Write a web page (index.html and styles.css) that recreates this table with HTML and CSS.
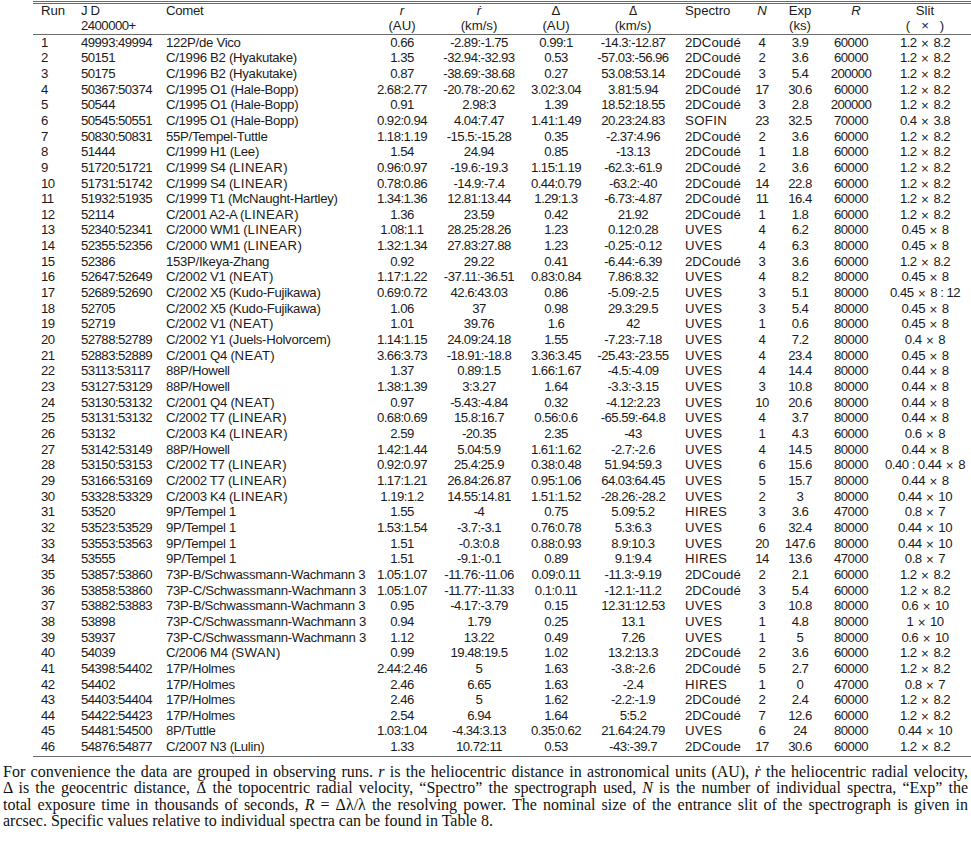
FILE: index.html
```html
<!DOCTYPE html>
<html lang="en">
<head>
<meta charset="utf-8">
<title>Observing runs</title>
<link rel="stylesheet" href="styles.css">
</head>
<body>
<div class="tbl">
  <div class="row head">
    <span class="c l run">Run</span><span class="c l jd"><span class="jdh">JD</span></span><span class="c l comet">Comet</span><span class="c m"><i>r</i></span><span class="c m"><i>ṙ</i></span><span class="c m">Δ</span><span class="c m"><span class="dd">Δ̇</span></span><span class="c l sp">Spectro</span><span class="c m"><i>N</i></span><span class="c m">Exp</span><span class="c m rh"><i>R</i></span><span class="c m">Slit</span>
  </div>
  <div class="row head head2">
    <span class="c l run"></span><span class="c l jd num">2400000+</span><span class="c l comet"></span><span class="c m">(AU)</span><span class="c m">(km/s)</span><span class="c m">(AU)</span><span class="c m">(km/s)</span><span class="c l sp"></span><span class="c m"></span><span class="c m">(ks)</span><span class="c m"></span><span class="c m">(&nbsp;&nbsp;&nbsp;×&nbsp;&nbsp;&nbsp;)</span>
  </div>
  <div class="body" id="rows"></div>
</div>
<p class="note"><span class="ln">For convenience the data are grouped in observing runs. <i>r</i> is the heliocentric distance in astronomical units (AU), <i>ṙ</i> the heliocentric radial velocity,</span> <span class="ln">Δ is the geocentric distance, <span class="ddp">Δ̇</span> the topocentric radial velocity, “Spectro” the spectrograph used, <i>N</i> is the number of individual spectra, “Exp” the</span> <span class="ln">total exposure time in thousands of seconds, <i>R</i> = Δλ/λ the resolving power. The nominal size of the entrance slit of the spectrograph is given in</span> arcsec. Specific values relative to individual spectra can be found in Table 8.</p>
<script src="app.js"></script>
</body>
</html>
```
FILE: app.js
```js
const data = `1|49993:49994|122P/de Vico|0.66|-2.89:-1.75|0.99:1|-14.3:-12.87|2DCoudé|4|3.9|60000|1.2 × 8.2
2|50151|C/1996 B2 (Hyakutake)|1.35|-32.94:-32.93|0.53|-57.03:-56.96|2DCoudé|2|3.6|60000|1.2 × 8.2
3|50175|C/1996 B2 (Hyakutake)|0.87|-38.69:-38.68|0.27|53.08:53.14|2DCoudé|3|5.4|200000|1.2 × 8.2
4|50367:50374|C/1995 O1 (Hale-Bopp)|2.68:2.77|-20.78:-20.62|3.02:3.04|3.81:5.94|2DCoudé|17|30.6|60000|1.2 × 8.2
5|50544|C/1995 O1 (Hale-Bopp)|0.91|2.98:3|1.39|18.52:18.55|2DCoudé|3|2.8|200000|1.2 × 8.2
6|50545:50551|C/1995 O1 (Hale-Bopp)|0.92:0.94|4.04:7.47|1.41:1.49|20.23:24.83|SOFIN|23|32.5|70000|0.4 × 3.8
7|50830:50831|55P/Tempel-Tuttle|1.18:1.19|-15.5:-15.28|0.35|-2.37:4.96|2DCoudé|2|3.6|60000|1.2 × 8.2
8|51444|C/1999 H1 (Lee)|1.54|24.94|0.85|-13.13|2DCoudé|1|1.8|60000|1.2 × 8.2
9|51720:51721|C/1999 S4 (LINEAR)|0.96:0.97|-19.6:-19.3|1.15:1.19|-62.3:-61.9|2DCoudé|2|3.6|60000|1.2 × 8.2
10|51731:51742|C/1999 S4 (LINEAR)|0.78:0.86|-14.9:-7.4|0.44:0.79|-63.2:-40|2DCoudé|14|22.8|60000|1.2 × 8.2
11|51932:51935|C/1999 T1 (McNaught-Hartley)|1.34:1.36|12.81:13.44|1.29:1.3|-6.73:-4.87|2DCoudé|11|16.4|60000|1.2 × 8.2
12|52114|C/2001 A2-A (LINEAR)|1.36|23.59|0.42|21.92|2DCoudé|1|1.8|60000|1.2 × 8.2
13|52340:52341|C/2000 WM1 (LINEAR)|1.08:1.1|28.25:28.26|1.23|0.12:0.28|UVES|4|6.2|80000|0.45 × 8
14|52355:52356|C/2000 WM1 (LINEAR)|1.32:1.34|27.83:27.88|1.23|-0.25:-0.12|UVES|4|6.3|80000|0.45 × 8
15|52386|153P/Ikeya-Zhang|0.92|29.22|0.41|-6.44:-6.39|2DCoudé|3|3.6|60000|1.2 × 8.2
16|52647:52649|C/2002 V1 (NEAT)|1.17:1.22|-37.11:-36.51|0.83:0.84|7.86:8.32|UVES|4|8.2|80000|0.45 × 8
17|52689:52690|C/2002 X5 (Kudo-Fujikawa)|0.69:0.72|42.6:43.03|0.86|-5.09:-2.5|UVES|3|5.1|80000|0.45 × 8 : 12
18|52705|C/2002 X5 (Kudo-Fujikawa)|1.06|37|0.98|29.3:29.5|UVES|3|5.4|80000|0.45 × 8
19|52719|C/2002 V1 (NEAT)|1.01|39.76|1.6|42|UVES|1|0.6|80000|0.45 × 8
20|52788:52789|C/2002 Y1 (Juels-Holvorcem)|1.14:1.15|24.09:24.18|1.55|-7.23:-7.18|UVES|4|7.2|80000|0.4 × 8
21|52883:52889|C/2001 Q4 (NEAT)|3.66:3.73|-18.91:-18.8|3.36:3.45|-25.43:-23.55|UVES|4|23.4|80000|0.45 × 8
22|53113:53117|88P/Howell|1.37|0.89:1.5|1.66:1.67|-4.5:-4.09|UVES|4|14.4|80000|0.44 × 8
23|53127:53129|88P/Howell|1.38:1.39|3:3.27|1.64|-3.3:-3.15|UVES|3|10.8|80000|0.44 × 8
24|53130:53132|C/2001 Q4 (NEAT)|0.97|-5.43:-4.84|0.32|-4.12:2.23|UVES|10|20.6|80000|0.44 × 8
25|53131:53132|C/2002 T7 (LINEAR)|0.68:0.69|15.8:16.7|0.56:0.6|-65.59:-64.8|UVES|4|3.7|80000|0.44 × 8
26|53132|C/2003 K4 (LINEAR)|2.59|-20.35|2.35|-43|UVES|1|4.3|60000|0.6 × 8
27|53142:53149|88P/Howell|1.42:1.44|5.04:5.9|1.61:1.62|-2.7:-2.6|UVES|4|14.5|80000|0.44 × 8
28|53150:53153|C/2002 T7 (LINEAR)|0.92:0.97|25.4:25.9|0.38:0.48|51.94:59.3|UVES|6|15.6|80000|0.40 : 0.44 × 8
29|53166:53169|C/2002 T7 (LINEAR)|1.17:1.21|26.84:26.87|0.95:1.06|64.03:64.45|UVES|5|15.7|80000|0.44 × 8
30|53328:53329|C/2003 K4 (LINEAR)|1.19:1.2|14.55:14.81|1.51:1.52|-28.26:-28.2|UVES|2|3|80000|0.44 × 10
31|53520|9P/Tempel 1|1.55|-4|0.75|5.09:5.2|HIRES|3|3.6|47000|0.8 × 7
32|53523:53529|9P/Tempel 1|1.53:1.54|-3.7:-3.1|0.76:0.78|5.3:6.3|UVES|6|32.4|80000|0.44 × 10
33|53553:53563|9P/Tempel 1|1.51|-0.3:0.8|0.88:0.93|8.9:10.3|UVES|20|147.6|80000|0.44 × 10
34|53555|9P/Tempel 1|1.51|-9.1:-0.1|0.89|9.1:9.4|HIRES|14|13.6|47000|0.8 × 7
35|53857:53860|73P-B/Schwassmann-Wachmann 3|1.05:1.07|-11.76:-11.06|0.09:0.11|-11.3:-9.19|2DCoudé|2|2.1|60000|1.2 × 8.2
36|53858:53860|73P-C/Schwassmann-Wachmann 3|1.05:1.07|-11.77:-11.33|0.1:0.11|-12.1:-11.2|2DCoudé|3|5.4|60000|1.2 × 8.2
37|53882:53883|73P-B/Schwassmann-Wachmann 3|0.95|-4.17:-3.79|0.15|12.31:12.53|UVES|3|10.8|80000|0.6 × 10
38|53898|73P-C/Schwassmann-Wachmann 3|0.94|1.79|0.25|13.1|UVES|1|4.8|80000|1 × 10
39|53937|73P-C/Schwassmann-Wachmann 3|1.12|13.22|0.49|7.26|UVES|1|5|80000|0.6 × 10
40|54039|C/2006 M4 (SWAN)|0.99|19.48:19.5|1.02|13.2:13.3|2DCoudé|2|3.6|60000|1.2 × 8.2
41|54398:54402|17P/Holmes|2.44:2.46|5|1.63|-3.8:-2.6|2DCoudé|5|2.7|60000|1.2 × 8.2
42|54402|17P/Holmes|2.46|6.65|1.63|-2.4|HIRES|1|0|47000|0.8 × 7
43|54403:54404|17P/Holmes|2.46|5|1.62|-2.2:-1.9|2DCoudé|2|2.4|60000|1.2 × 8.2
44|54422:54423|17P/Holmes|2.54|6.94|1.64|5:5.2|2DCoudé|7|12.6|60000|1.2 × 8.2
45|54481:54500|8P/Tuttle|1.03:1.04|-4.34:3.13|0.35:0.62|21.64:24.79|UVES|6|24|80000|0.44 × 10
46|54876:54877|C/2007 N3 (Lulin)|1.33|10.72:11|0.53|-43:-39.7|2DCoude|17|30.6|60000|1.2 × 8.2`;

const cls = ['c l run num', 'c l jd num', 'c l comet', 'c m num', 'c m num', 'c m num', 'c m num', 'c l sp', 'c m num', 'c m num', 'c m num', 'c m num'];
const body = document.getElementById('rows');

function appendText(cell, text) {
  const re = /\b[A-Z]{3,}\b/g;
  let last = 0;
  let m;
  while ((m = re.exec(text)) !== null) {
    cell.append(text.slice(last, m.index));
    const c = document.createElement('span');
    c.className = 'caps';
    c.textContent = m[0];
    cell.append(c);
    last = m.index + m[0].length;
  }
  cell.append(text.slice(last));
}

data.split('\n').forEach(line => {
  const row = document.createElement('div');
  row.className = 'row';
  line.split('|').forEach((v, i) => {
    const s = document.createElement('span');
    s.className = cls[i];
    const inner = document.createElement('span');
    if (i === 11) {
      const parts = v.split('×');
      inner.append(parts[0].trim());
      const x = document.createElement('span');
      x.className = 'times';
      x.textContent = '×';
      inner.append(x, parts[1].trim());
    } else if (i === 2 || i === 7) {
      appendText(inner, v);
    } else {
      inner.textContent = v;
    }
    s.appendChild(inner);
    row.appendChild(s);
  });
  body.appendChild(row);
});
```
FILE: styles.css
```css
html, body {
  margin: 0;
  padding: 0;
  background: #fff;
  overflow-x: hidden;
}

body {
  color: #1b1b1b;
}

.tbl {
  margin: 1px 0 0 33px;
  width: 938px;
  border-top: 3px double #6b6b6b;
  border-bottom: 1px solid #6b6b6b;
  font-family: "Liberation Sans", Arial, sans-serif;
  font-size: 13.2px;
}

.row {
  display: grid;
  grid-template-columns: 40px 85px 211px 66px 88px 66px 88px 70px 30px 46px 56px 92px;
  height: 15.67px;
  line-height: 15.67px;
  white-space: nowrap;
}

.head {
  height: 14.8px;
  line-height: 14.8px;
}

.head2 {
  border-bottom: 1px solid #6b6b6b;
}

.body {
  padding: 0 0 1.5px;
}

.c {
  display: flex;
  min-width: 0;
}

.l {
  justify-content: flex-start;
  padding-left: 8px;
}

.m {
  justify-content: center;
}

.num {
  letter-spacing: -0.55px;
}

.comet {
  letter-spacing: -0.3px;
}

.jdh {
  letter-spacing: 3px;
}

.caps {
  letter-spacing: 0.4px;
}

.rh {
  padding-left: 10px;
}

.dd {
  font-family: "DejaVu Sans", sans-serif;
  font-size: 12px;
}

.times {
  font-family: "DejaVu Sans", sans-serif;
  font-size: 10.5px;
  letter-spacing: 0;
  margin: 0 4px;
}

.note {
  margin: 7px 0 0;
  padding: 0 3px;
  font-family: "Liberation Serif", "Times New Roman", serif;
  font-size: 16px;
  line-height: 16.2px;
  text-align: justify;
  color: #111;
}

.ddp {
  font-family: "DejaVu Serif", serif;
  font-size: 14px;
}

.ln {
  display: block;
  text-align-last: justify;
}
```
